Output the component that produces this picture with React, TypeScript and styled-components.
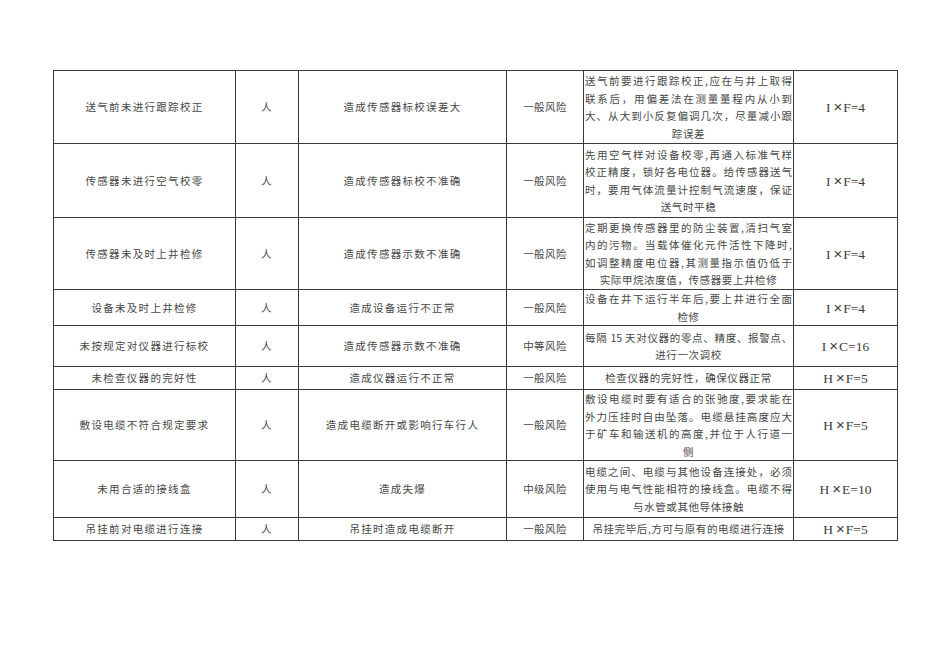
import React from "react";
import styled, { createGlobalStyle } from "styled-components";

const Global = createGlobalStyle`
  html, body { margin: 0; padding: 0; background: #fff; }
  body { font-family: "Noto Sans CJK SC", "Liberation Serif", serif; }
`;

const Page = styled.div`
  padding: 70px 0 0 53px;
  width: 950px;
  height: 672px;
  box-sizing: border-box;
`;

const Table = styled.table`
  border-collapse: collapse;
  table-layout: fixed;
  width: 844px;
  border: 1px solid #666;
  color: #474747;
  font-size: 10.5px;
`;

const Row = styled.tr<{ $h: number }>`
  height: ${(p) => p.$h}px;
`;

const Cell = styled.td<{ $spacing?: number }>`
  border: 1px solid #3a3a3a;
  padding: 0;
  text-align: center;
  vertical-align: middle;
  letter-spacing: ${(p) => p.$spacing ?? 1.3}px;
  line-height: 17.5px;
  font-family: "Noto Sans CJK SC", sans-serif;
`;

const TextCell = styled.td`
  border: 1px solid #3a3a3a;
  padding: 0 1px;
  vertical-align: middle;
  line-height: 17.5px;
  font-family: "Noto Sans CJK SC", sans-serif;
`;

const Line = styled.div<{ $last: boolean }>`
  white-space: nowrap;
  text-align: ${(p) => (p.$last ? "center" : "justify")};
  text-align-last: ${(p) => (p.$last ? "center" : "justify")};
  letter-spacing: ${(p) => (p.$last ? 0.6 : 0)}px;
`;

const ScoreCell = styled.td`
  border: 1px solid #3a3a3a;
  padding: 0;
  text-align: center;
  vertical-align: middle;
  font-family: "Liberation Serif", serif;
  font-size: 13.5px;
  color: #3c3c3c;
`;

const Mul = styled.span`
  display: inline-block;
  font-family: "Liberation Sans", sans-serif;
  font-size: 15px;
  margin: 0 1px 0 3px;
`;

type Item = {
  h: number;
  cause: string;
  who: string;
  result: string;
  level: string;
  measures: string[];
  a: string;
  b: string;
  n: string;
};

const rows: Item[] = [
  {
    h: 73,
    cause: "送气前未进行跟踪校正",
    who: "人",
    result: "造成传感器标校误差大",
    level: "一般风险",
    measures: [
      "送气前要进行跟踪校正,应在与井上取得",
      "联系后，用偏差法在测量量程内从小到",
      "大、从大到小反复偏调几次，尽量减小跟",
      "踪误差",
    ],
    a: "I",
    b: "F",
    n: "4",
  },
  {
    h: 74,
    cause: "传感器未进行空气校零",
    who: "人",
    result: "造成传感器标校不准确",
    level: "一般风险",
    measures: [
      "先用空气样对设备校零,再通入标准气样",
      "校正精度，锁好各电位器。给传感器送气",
      "时，要用气体流量计控制气流速度，保证",
      "送气时平稳",
    ],
    a: "I",
    b: "F",
    n: "4",
  },
  {
    h: 72,
    cause: "传感器未及时上井检修",
    who: "人",
    result: "造成传感器示数不准确",
    level: "一般风险",
    measures: [
      "定期更换传感器里的防尘装置,清扫气室",
      "内的污物。当载体催化元件活性下降时,",
      "如调整精度电位器,其测量指示值仍低于",
      "实际甲烷浓度值，传感器要上井检修",
    ],
    a: "I",
    b: "F",
    n: "4",
  },
  {
    h: 36,
    cause: "设备未及时上井检修",
    who: "人",
    result: "造成设备运行不正常",
    level: "一般风险",
    measures: ["设备在井下运行半年后,要上井进行全面", "检修"],
    a: "I",
    b: "F",
    n: "4",
  },
  {
    h: 41,
    cause: "未按规定对仪器进行标校",
    who: "人",
    result: "造成传感器示数不准确",
    level: "中等风险",
    measures: ["每隔 15 天对仪器的零点、精度、报警点、", "进行一次调校"],
    a: "I",
    b: "C",
    n: "16",
  },
  {
    h: 23,
    cause: "未检查仪器的完好性",
    who: "人",
    result: "造成仪器运行不正常",
    level: "一般风险",
    measures: ["检查仪器的完好性，确保仪器正常"],
    a: "H",
    b: "F",
    n: "5",
  },
  {
    h: 70,
    cause: "敷设电缆不符合规定要求",
    who: "人",
    result: "造成电缆断开或影响行车行人",
    level: "一般风险",
    measures: [
      "敷设电缆时要有适合的张驰度,要求能在",
      "外力压挂时自由坠落。电缆悬挂高度应大",
      "于矿车和输送机的高度,并位于人行道一",
      "侧",
    ],
    a: "H",
    b: "F",
    n: "5",
  },
  {
    h: 57,
    cause: "未用合适的接线盒",
    who: "人",
    result: "造成失爆",
    level: "中级风险",
    measures: [
      "电缆之间、电缆与其他设备连接处，必须",
      "使用与电气性能相符的接线盒。电缆不得",
      "与水管或其他导体接触",
    ],
    a: "H",
    b: "E",
    n: "10",
  },
  {
    h: 23,
    cause: "吊挂前对电缆进行连接",
    who: "人",
    result: "吊挂时造成电缆断开",
    level: "一般风险",
    measures: ["吊挂完毕后,方可与原有的电缆进行连接"],
    a: "H",
    b: "F",
    n: "5",
  },
];

const widths = [182, 63, 208, 77, 210, 104];

export default function App() {
  return (
    <>
      <Global />
      <Page>
        <Table>
          <colgroup>
            {widths.map((w, i) => (
              <col key={i} style={{ width: w }} />
            ))}
          </colgroup>
          <tbody>
            {rows.map((r, i) => (
              <Row key={i} $h={r.h}>
                <Cell>{r.cause}</Cell>
                <Cell>{r.who}</Cell>
                <Cell>{r.result}</Cell>
                <Cell $spacing={0.4}>{r.level}</Cell>
                <TextCell>
                  {r.measures.map((m, j) => (
                    <Line key={j} $last={j === r.measures.length - 1}>
                      {m}
                    </Line>
                  ))}
                </TextCell>
                <ScoreCell>
                  {r.a}
                  <Mul>×</Mul>
                  {r.b}={r.n}
                </ScoreCell>
              </Row>
            ))}
          </tbody>
        </Table>
      </Page>
    </>
  );
}
